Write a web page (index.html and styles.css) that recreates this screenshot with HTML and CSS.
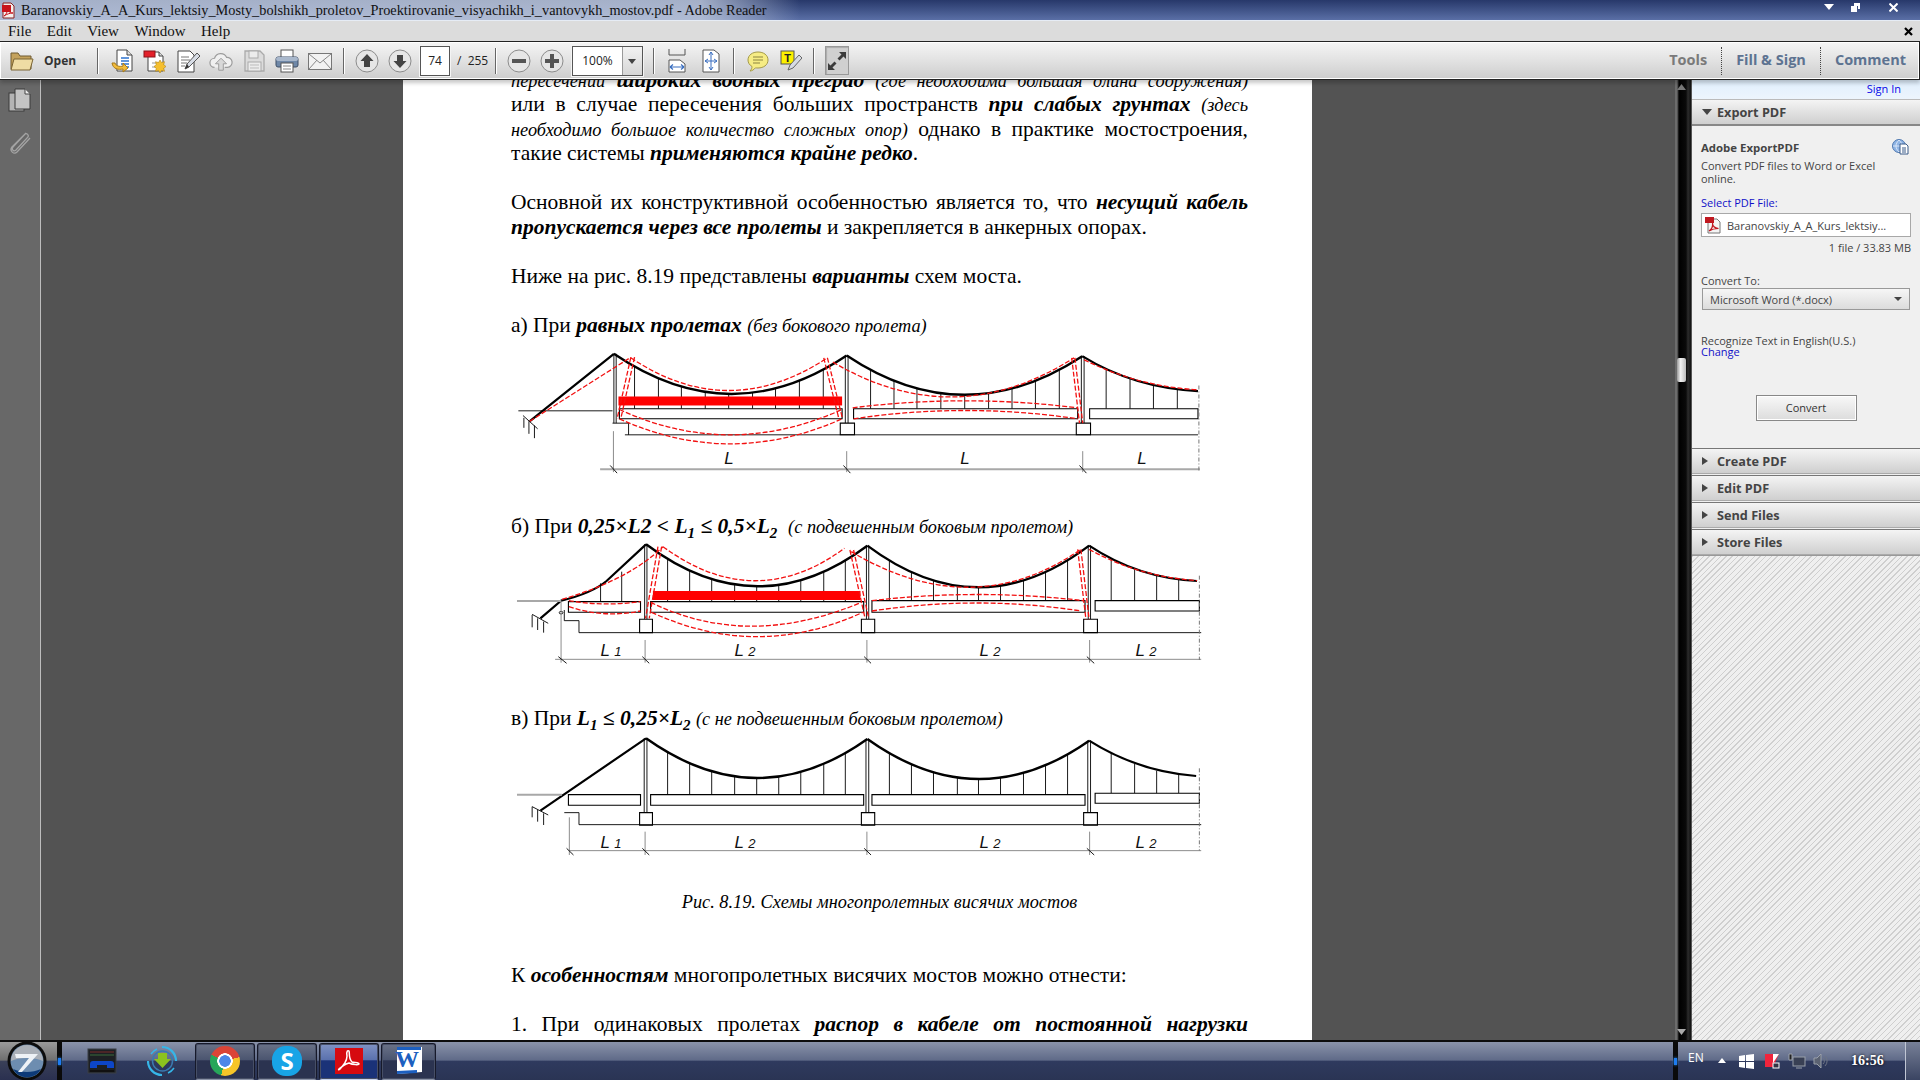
FILE: index.html
```html
<!DOCTYPE html>
<html lang="ru">
<head>
<meta charset="utf-8">
<title>Adobe Reader</title>
<link rel="stylesheet" href="styles.css">
</head>
<body>
<div class="app">
  <header class="titlebar">
    <svg class="ti-icon" width="13" height="17" viewBox="0 0 13 17"><path d="M1 1h8l3 3v12H1z" fill="#f4f0ee" stroke="#8a2020"/><rect x="0" y="3" width="9" height="7" fill="#c8141c"/><path d="M2 14c3-2 4-6 3-9 0 3 2 6 6 6-3 0-6 1-9 3z" fill="none" stroke="#c8141c"/></svg>
    <span class="ti-text">Baranovskiy_A_A_Kurs_lektsiy_Mosty_bolshikh_proletov_Proektirovanie_visyachikh_i_vantovykh_mostov.pdf - Adobe Reader</span>
    <div class="ti-ctrls">
      <svg width="10" height="6" viewBox="0 0 10 6"><path d="M0 0h10L5 6z" fill="#fff"/></svg>
      <svg width="9" height="9" viewBox="0 0 9 9"><path d="M3 0h6v6H7V3H3z" fill="#fff"/><rect y="3" width="6" height="6" fill="#fff"/></svg>
      <svg class="ti-x" width="9" height="9" viewBox="0 0 9 9"><path d="M0.5 0.5l8 8M8.5 0.5l-8 8" stroke="#fff" stroke-width="2"/></svg>
    </div>
  </header>
  <nav class="menubar">
    <span>File</span><span>Edit</span><span>View</span><span>Window</span><span>Help</span>
    <svg class="menu-x" width="9" height="9" viewBox="0 0 9 9"><path d="M1 1l7 7M8 1l-7 7" stroke="#000" stroke-width="2.2"/></svg>
  </nav>
  <div class="toolbar">
    <div class="tg g1">
      <svg width="24" height="24" viewBox="0 0 24 24"><path d="M1 20V4h7l2 3h11v13z" fill="#c4a25c" stroke="#6e5a30"/><path d="M1 21l3-11h19l-3 11z" fill="#efdca4" stroke="#7a6434"/></svg>
      <b class="open">Open</b>
    </div>
    <i class="sep s-open"></i>
    <div class="tg g2">
      <svg width="24" height="24" viewBox="0 0 24 24"><path d="M7 1h10l5 5v16H7z" fill="#fff" stroke="#444"/><path d="M17 1v5h5" fill="#ddd" stroke="#444"/><path d="M11 9h8M11 12h8M11 15h8M11 18h8" stroke="#2f74d0" stroke-width="1.4"/><path d="M2 14c1 6 6 7 11 6v3l5-4-5-5v3c-4 1-7 0-8-3z" fill="#f2bb3a" stroke="#a87a1a"/></svg>
      <svg width="24" height="24" viewBox="0 0 24 24"><path d="M5 3h11l4 4v15H5z" fill="#fff" stroke="#444"/><path d="M16 3v4h4" fill="#ddd" stroke="#444"/><rect x="1" y="2" width="11" height="6" fill="#e3202a" stroke="#8c1218"/><path d="M9 14h8M9 18h5" stroke="#999"/><path d="M17 11l1.500 2.500 3-.8-.8 3 2.300 1.800-2.300 1.800.8 3-3-.8-1.500 2.500-1.500-2.500-3 .8.8-3-2.300-1.800 2.300-1.800-.8-3 3 .8z" fill="#f5bf2e" stroke="#b08518" stroke-width=".6"/></svg>
      <svg width="24" height="24" viewBox="0 0 24 24"><path d="M2 2h12l4 4v17H2z" fill="#fff" stroke="#444"/><path d="M5 8h8M5 11h9M5 14h6M5 17h4" stroke="#777"/><path d="M9 20l2-5L21 4l3 3L13 18z" fill="#d8dde6" stroke="#555"/><path d="M9 20l2-5 2 3z" fill="#333"/></svg>
      <svg width="26" height="24" viewBox="0 0 26 24"><path d="M6 19a5 5 0 0 1 0-10 7 7 0 0 1 13-1 5.500 5.500 0 0 1 1 11h-3" fill="#f0f0f0" stroke="#9c9c9c" stroke-width="1.300"/><path d="M13 9l6 6h-3.500v7h-5v-7H7z" fill="#d8d8d8" stroke="#999"/></svg>
      <svg width="24" height="24" viewBox="0 0 24 24"><path d="M3 2h15l4 4v16H3z" fill="#dcdcdc" stroke="#aaa" stroke-width="1.300"/><rect x="7" y="2" width="9" height="7" fill="#ececec" stroke="#aaa"/><rect x="6" y="13" width="13" height="9" fill="#ececec" stroke="#aaa"/><path d="M8 16h9M8 19h9" stroke="#bbb"/></svg>
      <svg width="24" height="24" viewBox="0 0 24 24"><rect x="6" y="1" width="12" height="8" fill="#fff" stroke="#555"/><rect x="1" y="8" width="22" height="10" rx="2" fill="#6f88a8" stroke="#3f4f66"/><rect x="1" y="8" width="22" height="4" rx="2" fill="#a9b8cc"/><rect x="6" y="14" width="12" height="9" fill="#fff" stroke="#555"/><path d="M8 17h8M8 20h8" stroke="#888"/></svg>
      <svg width="24" height="24" viewBox="0 0 24 24"><rect x="0.500" y="4.500" width="23" height="16" fill="#f2f2f2" stroke="#777"/><path d="M1 5l11 9 11-9M1 20l8-9M23 20l-8-9" fill="none" stroke="#888"/></svg>
    </div>
    <i class="sep s2"></i>
    <div class="tg g3">
      <svg class="round" width="24" height="24" viewBox="0 0 24 24"><circle cx="12" cy="12" r="11" fill="#e6e6e6" stroke="#8c8c8c"/><path d="M12 5l6.500 7H15v6H9v-6H5.500z" fill="#444"/></svg>
      <svg class="round" width="24" height="24" viewBox="0 0 24 24"><circle cx="12" cy="12" r="11" fill="#e6e6e6" stroke="#8c8c8c"/><path d="M12 19l6.500-7H15V6H9v6H5.500z" fill="#444"/></svg>
      <span class="pageno">74</span>
      <span class="pagetot">/&nbsp; 255</span>
    </div>
    <i class="sep s3"></i>
    <div class="tg g4">
      <svg width="24" height="24" viewBox="0 0 24 24"><circle cx="12" cy="12" r="11" fill="#e6e6e6" stroke="#8c8c8c"/><rect x="5" y="10" width="14" height="4" fill="#555"/></svg>
      <svg width="24" height="24" viewBox="0 0 24 24"><circle cx="12" cy="12" r="11" fill="#e6e6e6" stroke="#8c8c8c"/><path d="M10 5h4v5h5v4h-5v5h-4v-5H5v-4h5z" fill="#555"/></svg>
      <div class="zoombox"><span class="zv">100%</span><span class="zarrow"></span></div>
    </div>
    <i class="sep s4"></i>
    <div class="tg g5">
      <svg width="18" height="24" viewBox="0 0 18 24"><path d="M1 0v6h16V0" fill="none" stroke="#555"/><path d="M1 23V11h11l5 4v8z" fill="#fff" stroke="#555"/><path d="M2 18h14M2 18l3-2.500M2 18l3 2.500M16 18l-3-2.500M16 18l-3 2.500" stroke="#3a6fc0" fill="none" stroke-width="1.200"/></svg>
      <svg width="18" height="24" viewBox="0 0 18 24"><path d="M1 1h11l5 4v18H1z" fill="#fff" stroke="#555"/><path d="M9 3v18M3 12h12M9 3L7 6M9 3l2 3M9 21l-2-3M9 21l2-3M3 12l3-2M3 12l3 2M15 12l-3-2M15 12l-3 2" stroke="#3a6fc0" fill="none"/></svg>
    </div>
    <i class="sep s5"></i>
    <div class="tg g6">
      <svg width="22" height="24" viewBox="0 0 22 24"><path d="M11 3c5.500 0 10 3 10 8s-4.500 8-10 8c-1 0-2 0-2.500-.2C7 20.500 5 22 3 22c1.500-1.500 2-3 2-4.500-2.500-1.500-4-3.800-4-6.500 0-5 4.500-8 10-8z" fill="#f6ec84" stroke="#a49a48"/><path d="M6 8h10M6 11h10M6 14h7" stroke="#8c8440"/></svg>
      <svg width="22" height="24" viewBox="0 0 22 24"><rect x="1" y="2" width="13" height="13" fill="#fcf000" stroke="#555"/><text class="ti-t" x="7.500" y="13">T</text><path d="M8 21l2-5L19 6l3 3-9 10z" fill="#d6dbe4" stroke="#666"/></svg>
    </div>
    <i class="sep s6"></i>
    <div class="expand">
      <svg width="22" height="24" viewBox="0 0 22 24"><path d="M13 3h7v7l-2.500-2.500-4 4-2-2 4-4zM9 21H2v-7l2.500 2.500 4-4 2 2-4 4z" fill="#3c3c3c"/></svg>
    </div>
    <div class="tabs">
      <span class="tab t-gray">Tools</span><i class="dots"></i>
      <span class="tab">Fill &amp; Sign</span><i class="dots"></i>
      <span class="tab">Comment</span>
    </div>
  </div>

  <main class="workspace">
    <aside class="sidebar">
      <svg width="24" height="24" viewBox="0 0 24 24"><rect x="1" y="5" width="15" height="18" fill="#b4b4b4" stroke="#3a3a3a"/><path d="M7 1h10l5 5v15H7z" fill="#c4c4c4" stroke="#3a3a3a"/><path d="M17 1v5h5" fill="#eee" stroke="#444"/></svg>
      <svg width="24" height="26" viewBox="0 0 24 26"><path d="M19 4L6 18c-2 2.500 1 5 3 3L21 8c1-2-1-4-3-3L5 18c-3 4 2 8 5 5L23 9" fill="none" stroke="#a4a4a4" stroke-width="1.300"/></svg>
    </aside>
    <section class="canvas">
      <article class="page">
        <p class="para first">
          <span class="ln j"><em class="sm">пересечении</em> <b class="bi">широких водных преград</b> <em class="sm">(где необходима большая длина сооружения)</em></span>
          <span class="ln j">или в случае пересечения больших пространств <b class="bi">при слабых грунтах</b> <em class="sm">(здесь</em></span>
          <span class="ln j"><em class="sm">необходимо большое количество сложных опор)</em> однако в практике мостостроения,</span>
          <span class="ln">такие системы <b class="bi">применяются крайне редко</b>.</span>
        </p>
        <p class="para">
          <span class="ln j">Основной их конструктивной особенностью является то, что <b class="bi">несущий кабель</b></span>
          <span class="ln"><b class="bi">пропускается через все пролеты</b> и закрепляется в анкерных опорах.</span>
        </p>
        <p class="para"><span class="ln">Ниже на рис. 8.19 представлены <b class="bi">варианты</b> схем моста.</span></p>
        <p class="cap"><span class="ln">а) При <b class="bi">равных пролетах</b> <em class="sm">(без бокового пролета)</em></span></p>

        <svg class="dg dg-a" width="720" height="177" viewBox="0 0 720 177">
          <g transform="translate(0 -36.500) scale(.4592 .3333)">
            <path class="thin" d="M293 170V325M345 170V325M395 170V325M447 170V325M498 170V325M550 170V325M600 170V325M652 170V325M704 170V325M807 170V325M858 170V325M908 170V325M960 170V325M1012 170V325M1064 170V325M1115 170V325M1166 170V325M1218 170V325M1320 206V325M1372 234V325M1423 251V325M1475 265V325"/>
            <path class="cab" d="M248 160Q502 398 755 165"/>
            <path class="cab" d="M755 165Q1010 400 1268 167"/>
            <path class="cabn" d="M65 362L248 160M1268 167Q1380 262 1520 272"/>
            <path class="ln1" d="M248 160V368M253 160V368M752 165V368M758 165V368M1266 167V368M1272 167V368"/>
            <rect class="rbar" x="258" y="288" width="487" height="27"/>
            <path class="deck" d="M260 325H745V355H260zM770 325H1258V355H770zM1284 325H1520V355H1284z"/>
            <path class="deck" d="M741 368H772V403H741zM1255 368H1286V403H1255z"/>
            <path class="ln1" d="M245 368H280V403M272 403H1520M40 331H245M50 345L82 385M52 352V382M63 362V400M75 375V413"/>
            <path class="red" d="M65 362L283 172M285 172Q497 368 713 172M725 185Q990 400 1250 172M1272 178Q1390 258 1520 268M285 170L255 355M293 170L263 355M705 172L738 355M713 172L746 355M1245 172L1262 368M1252 172L1269 368M260 327Q500 479 745 327M260 355Q500 505 745 355M768 322Q1012 280 1258 322M770 355Q1012 305 1258 355"/>
            <path class="gry" d="M218 506H1524"/>
            <path class="gry1" d="M247 392V515M755 452V515M1269 452V515"/>
            <path class="gdash" d="M1522 255V515"/>
            <path class="ln1" d="M240 495L255 518M748 495L763 518M1262 495L1277 518"/>
          </g>
          <text class="dl" x="229" y="127">L</text><text class="dl" x="465" y="127">L</text><text class="dl" x="642" y="127">L</text>
        </svg>

        <p class="cap"><span class="ln">б) При <b class="bi">0,25×L2 &lt; L<sub>1</sub> ≤ 0,5×L<sub>2</sub></b> &nbsp;<em class="sm">(с подвешенным боковым пролетом)</em></span></p>

        <svg class="dg dg-b" width="720" height="167" viewBox="0 0 720 167">
          <g transform="translate(0 -29) scale(.4592 .3333)">
            <path class="thin" d="M219 220V275M265 185V275M365 115V275M413 115V275M461 115V275M511 115V275M559 115V275M607 115V275M655 115V275M705 115V275M752 115V275M848 115V272M896 115V272M944 115V272M996 115V272M1042 115V272M1090 115V272M1140 115V272M1188 115V272M1236 115V272M1331 145V272M1382 178V272M1430 197V272M1478 209V272"/>
            <path class="cab" d="M318 103Q560 353 800 107"/>
            <path class="cab" d="M800 107Q1042 357 1283 107"/>
            <path class="cabn" d="M88 325L133 272Q200 250 232 213L318 103M1283 107Q1390 205 1518 213"/>
            <path class="ln1" d="M315 103V328M320 103V328M798 107V328M803 107V328M1281 107V328M1286 107V328"/>
            <rect class="rbar" x="333" y="243" width="452" height="27"/>
            <path class="deck" d="M149 275H306V307H149zM328 275H792V307H328zM810 272H1274V307H810zM1296 272H1523V303H1296z"/>
            <path class="deck" d="M304 328H332V368H304zM787 328H816V368H787zM1271 328H1301V368H1271z"/>
            <path class="ln1" d="M140 300V332H172V368M172 368H1527M70 313L105 340M70 315V352M82 325V360M95 335V368"/>
            <path class="gry" d="M37 273H133"/>
            <circle class="ln1" cx="133" cy="308" r="4"/>
            <path class="red" d="M135 268Q280 210 355 110M355 110Q555 312 750 115M765 125Q1030 342 1265 118M1283 118Q1390 200 1518 212M352 110L325 325M344 110L317 325M762 120L795 325M770 120L803 325M1265 118L1283 328M1258 118L1276 328M150 272Q225 290 306 275M150 290Q225 325 306 303M328 277Q540 420 787 277M330 307Q560 453 790 307M810 272Q1040 235 1270 272M810 303Q1040 255 1265 303"/>
            <path class="gry1" d="M120 448H1527M133 272V458M316 390V458M799 390V458M1284 390V458"/>
            <path class="gdash" d="M1523 197V450"/>
            <path class="ln1" d="M127 440L145 460M310 440L325 460M793 440L808 460M1278 440L1294 460"/>
          </g>
          <text class="dl" x="111" y="117">L <tspan class="dn">1</tspan></text><text class="dl" x="245" y="117">L <tspan class="dn">2</tspan></text><text class="dl" x="490" y="117">L <tspan class="dn">2</tspan></text><text class="dl" x="646" y="117">L <tspan class="dn">2</tspan></text>
        </svg>

        <p class="cap"><span class="ln">в) При <b class="bi">L<sub>1</sub> ≤ 0,25×L<sub>2</sub></b> <em class="sm">(с не подвешенным боковым пролетом)</em></span></p>

        <svg class="dg dg-c" width="720" height="160" viewBox="0 0 720 160">
          <g transform="translate(0 -30) scale(.4592 .3333)">
            <path class="thin" d="M365 125V283M413 125V283M461 125V283M511 125V283M559 125V283M607 125V283M655 125V283M705 125V283M752 125V283M848 125V283M896 125V283M944 125V283M996 125V283M1042 125V283M1090 125V283M1140 125V283M1188 125V283M1236 125V283M1331 160V280M1382 192V280M1430 212V280M1478 224V280"/>
            <path class="cab" d="M318 115Q560 352 800 117"/>
            <path class="cab" d="M800 117Q1042 355 1283 122"/>
            <path class="cabn" d="M88 332L318 115M1283 122Q1390 215 1516 228"/>
            <path class="ln1" d="M314 115V338M320 115V338M797 117V338M803 117V338M1280 122V338M1286 122V338"/>
            <path class="deck" d="M149 284H306V316H149zM328 284H792V316H328zM810 284H1274V316H810zM1296 280H1523V310H1296z"/>
            <path class="deck" d="M304 338H332V376H304zM787 338H816V376H787zM1271 338H1301V376H1271z"/>
            <path class="ln1" d="M140 338H172V374M172 374H1527M70 320L105 345M70 320V352M82 330V365M95 340V375"/>
            <path class="gry" d="M37 284H135"/>
            <path class="gry1" d="M150 452H1527M151 352V465M316 395V465M799 395V465M1284 395V465"/>
            <path class="gdash" d="M1523 205V452"/>
            <path class="ln1" d="M145 445L160 465M310 445L325 465M793 445L808 465M1278 445L1294 465"/>
          </g>
          <text class="dl" x="111" y="118">L <tspan class="dn">1</tspan></text><text class="dl" x="245" y="118">L <tspan class="dn">2</tspan></text><text class="dl" x="490" y="118">L <tspan class="dn">2</tspan></text><text class="dl" x="646" y="118">L <tspan class="dn">2</tspan></text>
        </svg>

        <p class="figcap">Рис. 8.19. Схемы многопролетных висячих мостов</p>
        <p class="para"><span class="ln">К <b class="bi">особенностям</b> многопролетных висячих мостов можно отнести:</span></p>
        <p class="para"><span class="ln j">1. При одинаковых пролетах <b class="bi">распор в кабеле от постоянной нагрузки</b></span></p>
      </article>
    </section>
    <div class="scroll">
      <svg width="9" height="6" viewBox="0 0 9 6"><path d="M0 6L4.500 0 9 6z" fill="#777"/></svg>
      <i class="thumb"></i>
      <svg class="sdown" width="9" height="6" viewBox="0 0 9 6"><path d="M0 0L4.500 6 9 0z" fill="#aaa"/></svg>
    </div>
    <aside class="panel">
      <div class="signin"><a>Sign In</a></div>
      <h3 class="phead open-h"><i class="tri-d"></i>Export PDF</h3>
      <div class="pbody">
        <div class="ptitle"><b>Adobe ExportPDF</b>
          <svg width="17" height="16" viewBox="0 0 17 16"><circle cx="7" cy="7" r="6.500" fill="#8fb4e4" stroke="#4f78b0"/><path d="M1 7h12M7 1c-4 4-4 8 0 12M7 1c4 4 4 8 0 12" fill="none" stroke="#e8f0fa" stroke-width=".8"/><path d="M8 5h6l2 2v8H8z" fill="#fff" stroke="#3a5a88"/><path d="M10 9h4M10 11h4M10 13h4" stroke="#3a5a88"/></svg>
        </div>
        <p class="pdesc">Convert PDF files to Word or Excel<br>online.</p>
        <p class="plink sel">Select PDF File:</p>
        <div class="filebox">
          <svg width="17" height="18" viewBox="0 0 17 18"><path d="M3 3h9l3 3v11H3z" fill="#f4f4f4" stroke="#777"/><rect x="0" y="1" width="9" height="6" fill="#c01820"/><path d="M4 15c3-2 4-5 3.500-8 0 3 2 5 6 5.500-3.500 0-6.500.7-9.500 2.500z" fill="none" stroke="#c01820" stroke-width="1.200"/></svg>
          <span>Baranovskiy_A_A_Kurs_lektsiy...</span>
        </div>
        <p class="psize">1 file / 33.83 MB</p>
        <p class="plabel">Convert To:</p>
        <div class="select"><span>Microsoft Word (*.docx)</span><i class="tri-s"></i></div>
        <p class="plabel rec">Recognize Text in English(U.S.)</p>
        <p class="plink chg">Change</p>
        <div class="btnrow"><button class="convert">Convert</button></div>
      </div>
      <h3 class="phead"><i class="tri-r"></i>Create PDF</h3>
      <h3 class="phead"><i class="tri-r"></i>Edit PDF</h3>
      <h3 class="phead"><i class="tri-r"></i>Send Files</h3>
      <h3 class="phead"><i class="tri-r"></i>Store Files</h3>
      <div class="hatch"></div>
    </aside>
  </main>

  <footer class="taskbar">
    <div class="startseg">
      <svg width="40" height="40" viewBox="0 0 40 40"><circle cx="20" cy="20" r="19.500" fill="#0c0c0c"/><circle cx="20" cy="20" r="16.500" fill="#6d8db0"/><path d="M4 20a16 16 0 0 1 32 0c-8-4-24-4-32 0z" fill="#aab0b8"/><path d="M6 28a16 16 0 0 0 28 0c-9 4-19 4-28 0z" fill="#0d3a78"/><path d="M8 13h23L15 31h-4l11-14H9z" fill="#eef2f6"/></svg>
    </div>
    <div class="tsep"><i></i></div>
    <div class="tasks">
      <svg class="ta-win" width="30" height="28" viewBox="0 0 30 28"><rect x="1" y="2" width="28" height="24" fill="#1d2024" stroke="#3a3e44"/><path d="M3 5h24" stroke="#7a2a2a"/><path d="M3 8h24" stroke="#3a6a3a"/><path d="M3 21v-4a3 3 0 0 1 3-3h18a3 3 0 0 1 3 3v4h-7v-3H10v3z" fill="#0d46c8"/><rect x="3" y="23" width="24" height="2" fill="#111"/></svg>
      <svg class="ta-dl" width="31" height="32" viewBox="0 0 31 32"><path d="M15 2a14 14 0 0 1 14 14M15 30a14 14 0 0 1-14-14" fill="none" stroke="#36b6e8" stroke-width="2.200"/><path d="M4 9a14 14 0 0 1 6-5M27 23a14 14 0 0 1-6 5" fill="none" stroke="#36b6e8" stroke-width="1.500"/><circle cx="15.500" cy="16" r="10" fill="none" stroke="#3a7ab0" stroke-width="1.500"/><path d="M11 8h9v6h4l-8.500 9L7 14h4z" fill="#8cc21e"/></svg>
      <div class="tbtn"><i class="chrome"></i></div>
      <div class="tbtn"><i class="skype">S</i></div>
      <div class="tbtn active">
        <svg width="28" height="26" viewBox="0 0 28 26"><rect width="28" height="26" fill="#d60a10"/><path d="M4 21c5-3 8-9 8-13-1-5 1-6 2-5 1 2-1 7 3 11 2 1 7 0 7 2 0 1-6 1-10-1-4 1-7 3-9 6-1 1-2 1-1 0z" fill="none" stroke="#fff" stroke-width="1.500"/></svg>
      </div>
      <div class="tbtn word">
        <svg width="30" height="30" viewBox="0 0 30 30"><path d="M3 1h25v25L3 28z" fill="#fff"/><path d="M3 1h24v3H3zM3 25l20-1v3l-20 1z" fill="#1c5fc0"/><text class="w" x="1" y="21">W</text></svg>
      </div>
    </div>
    <div class="tsep"><i></i></div>
    <div class="tray">
      <span class="lang">EN</span>
      <svg class="tr-up" width="8" height="5" viewBox="0 0 8 5"><path d="M0 5L4 0l4 5z" fill="#fff"/></svg>
      <svg class="tr-flag" width="15" height="15" viewBox="0 0 15 15"><path d="M0 2l6-1v6H0zM7 1l8-1v7H7zM0 8h6v6l-6-1zM7 8h8v7l-8-1z" fill="#fff"/></svg>
      <svg class="tr-kas" width="16" height="16" viewBox="0 0 16 16"><path d="M1 1h14L9 14H1z" fill="#f0243c"/><path d="M9 1h6L9 10z" fill="#fff"/><rect x="9" y="10" width="6" height="5" fill="#334" stroke="#fff"/></svg>
      <svg class="tr-net" width="18" height="16" viewBox="0 0 18 16"><rect x="5" y="4" width="12" height="9" fill="#394054" stroke="#9aa0aa"/><path d="M8 15h6M1 1h3v6H1z" stroke="#9aa0aa" fill="#222"/></svg>
      <svg class="tr-vol" width="16" height="16" viewBox="0 0 16 16"><path d="M1 5h3l4-4v14l-4-4H1z" fill="#5b6272" stroke="#9aa0aa"/><path d="M10 5a4 4 0 0 1 0 6M12 3a7 7 0 0 1 0 10" fill="none" stroke="#6d7484"/></svg>
      <span class="clock">16:56</span>
      <i class="showdesk"></i>
    </div>
  </footer>
</div>
</body>
</html>
```
FILE: styles.css
```css
* { box-sizing: border-box; }
html, body { margin: 0; padding: 0; height: 100%; overflow: hidden; }
body { font-family: "Open Sans", "Liberation Sans", sans-serif; }
p, h3 { margin: 0; }
i { font-style: normal; display: block; }
.app { display: flex; flex-direction: column; width: 1920px; height: 1080px; }

/* title bar */
.titlebar {
  height: 21px; flex: none; display: flex; align-items: center; padding-left: 2px;
  border-bottom: 1px solid #e6ecf5;
  background:
    linear-gradient(90deg, rgba(196,206,224,.8) 0, rgba(196,206,224,.8) 700px, rgba(196,206,224,0) 800px),
    linear-gradient(#27386a, #5a6fa6);
}
.ti-text { margin-left: 6px; font: 14.300px/20px "Liberation Serif", serif; color: #111; white-space: nowrap; }
.ti-ctrls { margin-left: auto; display: flex; align-items: center; gap: 17px; padding: 0 22px 6px 0; }
.ti-x { margin-left: 12px; }

/* menu */
.menubar {
  height: 20px; flex: none; display: flex; align-items: center; gap: 15.500px; padding-left: 8px;
  background: #dcdcdc; font: 15px/20px "Liberation Serif", serif; color: #111;
}
.menu-x { margin-left: auto; margin-right: 7px; }

/* toolbar */
.toolbar {
  height: 39px; flex: none; position: relative; z-index: 2; display: flex; align-items: center; padding-left: 10px;
  border: 1px solid #222; border-left: 0; box-shadow: inset 0 0 0 1px #fff, 0 3px 4px rgba(0,0,0,.22);
  background: linear-gradient(#f5f5f5, #e4e4e4 45%, #cdcdcd);
}
.tg { display: flex; align-items: center; flex: none; }
.g1 { gap: 10px; width: 67px; }
.open { font: 700 12px/16px "Open Sans", sans-serif; color: #333; }
.g2 { gap: 9px; }
.g2 svg { width: 24px; }
.g3, .g4 { gap: 9px; }
.g5 { gap: 16px; }
.g6 { gap: 11px; }
.sep { width: 2px; height: 26px; flex: none; border-left: 1px solid #666; border-right: 1px solid #fff; }
.s-open { margin-left: 20px; margin-right: 11px; }
.s2 { margin-left: 11px; margin-right: 10px; }
.s3 { margin-left: 9px; margin-right: 10px; }
.s4 { margin-left: 10px; margin-right: 13px; }
.s5 { margin-left: 13px; margin-right: 12px; }
.s6 { margin-left: 11px; margin-right: 10px; }
.pageno { width: 30px; height: 30px; margin-left: -1px; background: #fff; border: 1px solid #555; box-shadow: 0 0 0 1px #f4f4f4; text-align: center; font: 12px/28px "Open Sans", sans-serif; color: #222; }
.pagetot { font: 12px/16px "Open Sans", sans-serif; color: #222; margin-left: -2px; width: 29px; white-space: nowrap; }
.zoombox { width: 71px; height: 30px; margin-left: -1px; display: flex; border: 1px solid #555; background: #fff; box-shadow: 0 0 0 1px #f4f4f4; }
.zv { flex: 1; text-align: center; font: 12px/28px "Open Sans", sans-serif; color: #222; }
.zarrow { width: 20px; position: relative; background: linear-gradient(#f2f2f2, #d6d6d6); border-left: 1px solid #999; }
.zarrow::after { content: ""; position: absolute; left: 5px; top: 12px; border: 4px solid transparent; border-top: 5px solid #444; border-bottom: 0; }
.ti-t { font: 700 11px "Liberation Sans", sans-serif; text-anchor: middle; fill: #222; }
.expand { width: 24px; height: 29px; flex: none; display: flex; align-items: center; justify-content: center; border: 1px solid #999; background: #d0d0d0; box-shadow: inset 1px 1px 1px #aaa; }
.tabs { margin-left: auto; display: flex; align-items: center; padding-right: 13px; }
.tab { font: 700 14.500px/20px "Open Sans", sans-serif; color: #5d7391; white-space: nowrap; margin-top: -2px; }
.t-gray { color: #7a7a7a; }
.dots { width: 0; height: 28px; margin: 0 14px; border-left: 1px dotted #444; }

/* workspace */
.workspace { flex: 1; min-height: 0; display: flex; }
.sidebar { width: 41px; flex: none; background: #686868; border-right: 1px solid #bdbdbd; display: flex; flex-direction: column; align-items: center; padding-top: 8px; gap: 17px; }
.sidebar svg:nth-child(2) { margin-left: -3px; }
.canvas { flex: 1; min-width: 0; overflow: hidden; background: #535353; display: flex; justify-content: center; padding-right: 1px; }
.page { width: 909px; height: 100%; flex: none; overflow: hidden; background: #fff; padding: 0 64px 0 108px; color: #000; font: 21.500px/24.500px "Liberation Serif", serif; }
.ln { display: block; white-space: nowrap; }
.j { text-align: justify; text-align-last: justify; white-space: normal; }
.sm { font-size: 18.300px; font-style: italic; line-height: 0; }
.bi { font-weight: 700; font-style: italic; }
sub { font-size: 15px; line-height: 0; }
.para { margin-bottom: 24.500px; }
.first { margin-top: -12.500px; }
.cap { margin: 0; }
.dg { display: block; margin-left: -11px; overflow: hidden; }
.figcap { margin: 0 0 48px; height: 24.500px; text-align: center; font: italic 18.300px/24.500px "Liberation Serif", serif; }

/* drawing strokes */
.dg path, .dg rect, .dg circle { vector-effect: non-scaling-stroke; }
.thin { fill: none; stroke: #000; stroke-width: .9; }
.cab { fill: #fff; stroke: #000; stroke-width: 2.400; }
.cabn { fill: none; stroke: #000; stroke-width: 2.200; }
.ln1 { fill: none; stroke: #000; stroke-width: .9; }
.deck { fill: #fff; stroke: #000; stroke-width: 1.100; }
.rbar { fill: #f00; stroke: none; }
.red { fill: none; stroke: #f21010; stroke-width: 1.300; stroke-dasharray: 5 2; }
.gry { fill: none; stroke: #a8a8a8; stroke-width: 2; }
.gry1 { fill: none; stroke: #8c8c8c; stroke-width: 1; }
.gdash { fill: none; stroke: #777; stroke-width: 1; stroke-dasharray: 4 2 1 2; }
.dl { font: italic 17px "Liberation Sans", sans-serif; fill: #111; text-anchor: middle; }
.dn { font-size: 13px; }

/* scrollbar */
.scroll { width: 16px; flex: none; display: flex; flex-direction: column; align-items: center; padding: 4px 3px 5px 0; background: linear-gradient(90deg, #6c6c6c 0, #6c6c6c 2px, #000 4px, #0a0a0a 11px, #2c2c2c 13px, #111 100%); }
.thumb { width: 9px; height: 24px; margin-top: 268px; border-radius: 2px; background: linear-gradient(90deg, #999, #f2f2f2 40%, #bbb); }
.sdown { margin-top: auto; }

/* right panel */
.panel { width: 229px; flex: none; display: flex; flex-direction: column; background: #f0f0f0; font-size: 11px; color: #444; border-left: 1px solid #555; }
.signin { height: 19px; flex: none; text-align: right; padding-right: 19px; font-size: 11px; line-height: 17px; background: linear-gradient(#e0effd, #edf5fd); color: #0808e8; }
.phead { height: 26px; flex: none; margin-bottom: 1px; display: flex; align-items: center; gap: 5px; padding-left: 10px; font: 700 12.700px/20px "Open Sans", sans-serif; color: #444; background: linear-gradient(#f4f4f4, #cfcfcf); border-top: 1px solid #777; border-bottom: 1px solid #aaa; }
.open-h { border-top: 1px solid #bbb; border-bottom: 2px solid #888; height: 27px; margin-bottom: 0; }
.tri-d { border: 5px solid transparent; border-top: 6px solid #444; border-bottom: 0; }
.tri-r { border: 4px solid transparent; border-left: 6px solid #444; border-right: 0; margin-right: 4px; }
.pbody { height: 322px; flex: none; padding: 14px 9px 0 9px; line-height: 13px; }
.ptitle { height: 14px; display: flex; justify-content: space-between; align-items: center; padding-right: 2px; font-size: 11.400px; }
.ptitle b { font-weight: 700; }
.pdesc { margin-top: 5px; }
.plink { color: #1010c8; }
.sel { margin-top: 11px; }
.filebox { height: 24px; margin-top: 4px; display: flex; align-items: center; gap: 5px; padding-left: 3px; background: #fff; border: 1px solid #a8a8a8; color: #444; }
.psize { margin-top: 4px; text-align: right; }
.plabel { margin-top: 20px; }
.select { height: 22px; margin-top: 1px; margin-right: 1px; margin-left: 1px; display: flex; align-items: center; justify-content: space-between; padding: 0 7px; background: linear-gradient(#f6f6f6, #dcdcdc); border: 1px solid #999; }
.tri-s { border: 4px solid transparent; border-top: 4px solid #444; border-bottom: 0; }
.rec { margin-top: 24px; }
.chg { line-height: 11px; margin-top: -1px; }
.btnrow { margin-top: 38px; display: flex; justify-content: center; }
.convert { width: 101px; height: 26px; padding: 0; font: 11px/20px "Open Sans", sans-serif; color: #333; background: linear-gradient(#f8f8f8, #dcdcdc); border: 1px solid #888; box-shadow: inset 0 0 0 1px #fff; }
.hatch { flex: 1; margin-top: -1px; background: repeating-linear-gradient(135deg, #cfcfcf 0, #cfcfcf 1px, #efefef 1px, #efefef 4px); border-top: 1px solid #999; }

/* taskbar */
.taskbar { height: 40px; flex: none; display: flex; position: relative; z-index: 3; border-top: 2px solid #0c0c0c; background: linear-gradient(#8a93aa, #5f6a88 48%, #2f3a5e 50%, #2a3454); }
.startseg { width: 57px; flex: none; display: flex; align-items: center; padding-left: 7px; background: linear-gradient(#9a9a9a, #6f6f6f 48%, #3a4058 50%, #2a3050); }
.tsep { width: 5px; flex: none; background: #0a0a0a; display: flex; align-items: center; justify-content: center; }
.tsep i { width: 3px; height: 7px; background: #1e7cf0; box-shadow: 0 0 3px #3b9bff; }
.tasks { flex: 1; min-width: 0; display: flex; align-items: center; padding-left: 25px; }
.ta-dl { margin-left: 30px; margin-right: 17px; }
.tbtn { width: 60px; height: 37px; margin-right: 2px; flex: none; display: flex; align-items: center; justify-content: center; border: 1px solid #16192a; border-bottom-color: #8c94a8; border-radius: 3px; background: linear-gradient(#6a7287, #4b5570 45%, #2b3350 48%, #2b3350); box-shadow: inset 0 0 0 1px #474f66; }
.active { background: linear-gradient(#7f92c4, #5a71ae 45%, #1a3278 48%, #1a3278); border-bottom-color: #c8d4ee; }
.word { width: 55px; }
.chrome { width: 30px; height: 30px; border-radius: 50%; background: radial-gradient(circle, #4d86e8 0, #4d86e8 5.500px, #fff 6px, #fff 7.500px, transparent 8px), conic-gradient(from -65deg, #db4437 0, #db4437 140deg, #f6c528 140deg, #f6c528 260deg, #27a65a 260deg, #27a65a 360deg); }
.skype { width: 30px; height: 30px; border-radius: 45%; background: #18a4e6; color: #fff; text-align: center; font: 700 24px/30px "Open Sans", sans-serif; }
.w { font: 700 24px "Liberation Serif", serif; fill: #1c5fc0; }
.tray { width: 242px; flex: none; display: flex; align-items: center; padding-left: 10px; color: #fff; }
.lang { font: 12px/14px "Open Sans", sans-serif; margin-top: -7px; width: 30px; }
.tr-up { margin-right: 13px; margin-top: -2px; }
.tr-flag { margin-right: 10px; }
.tr-kas { margin-right: 8px; }
.tr-net { margin-right: 7px; }
.tr-vol { margin-right: 22px; }
.clock { font: 700 14px/16px "Liberation Serif", serif; text-shadow: 0 0 3px #000; }
.showdesk { width: 15px; height: 38px; margin-left: auto; background: linear-gradient(#778097, #3a4462); border-left: 1px solid #c0c6d4; }
```
